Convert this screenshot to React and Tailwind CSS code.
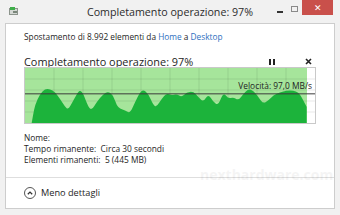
import React from "react";

// speed samples traced from the dialog, in a 3x grid (x: 75..945, y: 36..204)
const samples = [
  [95, 204], [100, 175], [105, 150], [120, 115], [135, 100], [150, 100], [165, 110],
  [180, 130], [195, 155], [205, 163], [220, 135], [235, 108], [242, 105], [250, 115],
  [265, 155], [275, 165], [290, 140], [310, 115], [325, 108], [340, 120], [350, 150],
  [360, 160], [375, 165], [390, 175], [405, 140], [420, 110], [430, 102], [445, 115],
  [460, 150], [470, 155], [485, 130], [500, 113], [515, 120], [530, 115], [545, 125],
  [560, 110], [580, 108], [595, 125], [610, 140], [625, 115], [640, 140], [655, 150],
  [670, 110], [685, 130], [700, 125], [715, 135], [730, 115], [745, 100], [760, 105],
  [775, 125], [790, 145], [805, 135], [820, 120], [840, 110], [860, 105], [880, 105],
  [895, 110], [905, 125], [915, 145], [920, 155],
];

const buildPath = () => {
  const pts = samples.map(([x, y]) => [(x - 75) / 3, (y - 36) / 3]);
  let d = `M${pts[0][0]},56 L${pts[0][0]},${pts[0][1]}`;
  for (let i = 1; i < pts.length - 1; i++) {
    const mx = (pts[i][0] + pts[i + 1][0]) / 2;
    const my = (pts[i][1] + pts[i + 1][1]) / 2;
    d += ` Q${pts[i][0]},${pts[i][1]} ${mx},${my}`;
  }
  const last = pts[pts.length - 1];
  d += ` L${last[0]},${last[1]} L${last[0]},56 Z`;
  return d;
};

const SpeedGraph = () => {
  const cols = Array.from({ length: 9 }, (_, i) => (i + 1) * 29);
  const rows = [11.2, 22.4, 33.6, 44.8];
  return (
    <div className="relative ml-[18px] w-[292px] h-[57px] border border-[#c9c9c9] bg-white">
      <svg width="290" height="55" viewBox="0 0 290 56" preserveAspectRatio="none" className="block">
        <rect x="0" y="0" width="282" height="56" fill="#a6e59b" />
        {cols.map((x) => (
          <line key={x} x1={x} y1="0" x2={x} y2="56" stroke="#000" strokeOpacity="0.09" strokeWidth="1" />
        ))}
        {rows.map((y) => (
          <line key={y} x1="0" y1={y} x2="290" y2={y} stroke="#000" strokeOpacity="0.09" strokeWidth="1" />
        ))}
        <path d={buildPath()} fill="#1cb33b" />
        <line x1="0" y1="26.3" x2="290" y2="26.3" stroke="#3a3a3a" strokeWidth="1" />
      </svg>
      <span className="absolute right-[3px] top-[13px] text-[8.4px] leading-[10px] text-[#222] whitespace-nowrap">
        Velocità: 97,0 MB/s
      </span>
    </div>
  );
};

const App = () => {
  return (
    <div
      className="relative w-[340px] h-[215px] bg-[#f1f1f1] overflow-hidden text-[#1e1e1e]"
      style={{ fontFamily: '"Open Sans", "Noto Sans", sans-serif' }}
    >
      {/* title bar */}
      <div className="grid grid-cols-[68px_1fr_68px] h-[23px]">
        <div className="pl-[9px] pt-[7px]">
          <svg width="10" height="8" viewBox="0 0 10 8">
            <rect x="0.5" y="1.5" width="8" height="6" fill="#d4d8d4" stroke="#8c948c" />
            <rect x="1" y="0" width="5" height="3" fill="#3fae4a" />
            <rect x="4" y="4" width="4" height="2" fill="#7a867a" />
          </svg>
        </div>
        <div className="text-center text-[10.7px] leading-[25px] text-[#2c2c2c] whitespace-nowrap">
          Completamento operazione: 97%
        </div>
        <div className="flex items-start justify-end pr-[7px]">
          <div className="w-[15px] h-[15px] flex items-center justify-center">
            <div className="w-[6px] h-[2px] bg-[#333] mt-[9px]" />
          </div>
          <div className="w-[15px] h-[15px] flex items-start justify-center">
            <div className="w-[7px] h-[6px] border border-[#8a8a8a] mt-[6px]" />
          </div>
          <div className="w-[31px] h-[15px] bg-[#c9504b] flex items-center justify-center text-white text-[9px] leading-none">
            ✕
          </div>
        </div>
      </div>

      {/* dialog body */}
      <div className="mx-[5px] h-[186px] bg-white border border-[#cdcdcd] flex flex-col">
        <div className="pl-[18px] pt-[7px] text-[8.3px] leading-[11px] whitespace-nowrap">
          Spostamento di 8.992 elementi da <span className="text-[#2e6fc0]">Home</span> a{" "}
          <span className="text-[#2e6fc0]">Desktop</span>
        </div>
        <div className="flex items-center mt-[14px] h-[11px] pl-[18px] pr-[22px]">
          <span className="text-[10.9px] leading-[11px] whitespace-nowrap">Completamento operazione: 97%</span>
          <div className="ml-auto flex items-center gap-[1.5px] w-[8px] justify-center">
            <div className="w-[2px] h-[6px] bg-[#222]" />
            <div className="w-[2px] h-[6px] bg-[#222]" />
          </div>
          <div className="ml-[28px] w-[8px] flex justify-center">
            <svg width="7" height="7" viewBox="0 0 7 7">
              <path d="M1 1L6 6M6 1L1 6" stroke="#222" strokeWidth="1.6" />
            </svg>
          </div>
        </div>

        <SpeedGraph />

        <div className="pl-[18px] mt-[8px] text-[8.4px] leading-[11px] whitespace-pre">
          <div>Nome:</div>
          <div>Tempo rimanente:  Circa 30 secondi</div>
          <div>Elementi rimanenti:  5 (445 MB)</div>
        </div>

        <div className="mt-[12px] border-t border-[#dedede] h-[30px] flex items-center pl-[18px] gap-[5px]">
          <div className="w-[12px] h-[12px] rounded-full border border-[#555] flex items-center justify-center">
            <svg width="6" height="4" viewBox="0 0 6 4">
              <path d="M0.8 3.3L3 1.1L5.2 3.3" fill="none" stroke="#333" strokeWidth="1.3" />
            </svg>
          </div>
          <span className="text-[9.2px] leading-[12px]">Meno dettagli</span>
        </div>
      </div>

      {/* faint site watermark */}
      <div className="absolute left-[200px] top-[168px] text-[14px] font-bold leading-[14px] text-[#000] opacity-[0.04] whitespace-nowrap">
        nexthardware.com
      </div>
    </div>
  );
};

export default App;
